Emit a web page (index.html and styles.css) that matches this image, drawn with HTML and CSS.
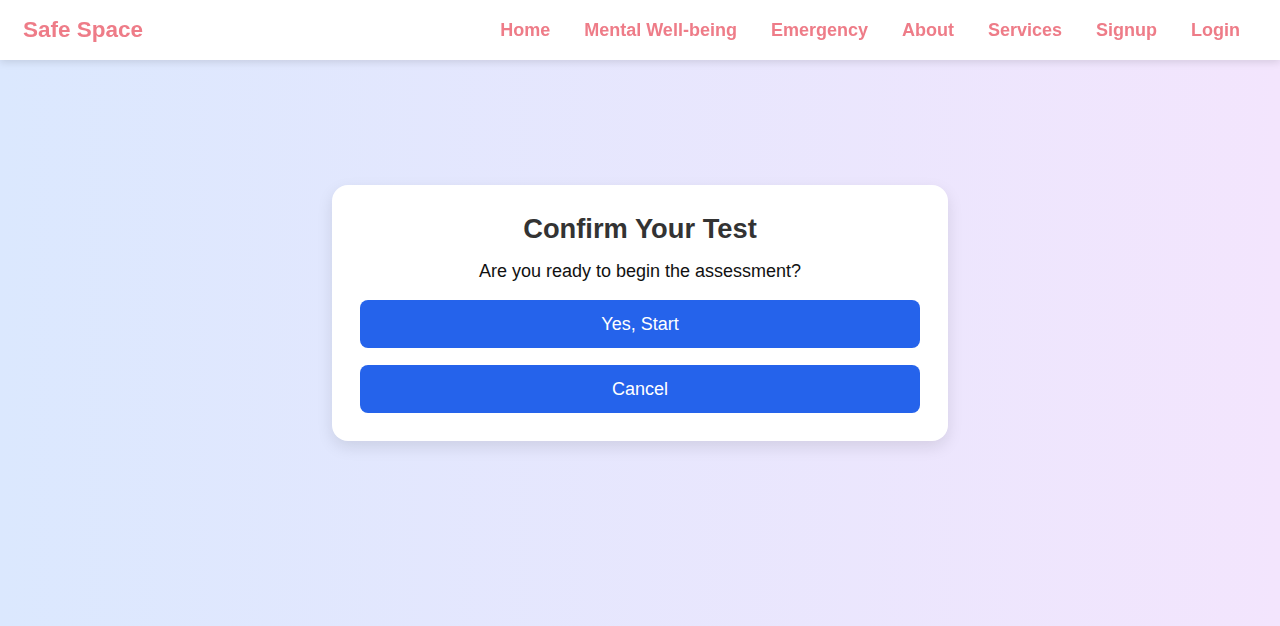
FILE: index.html
```html
<!DOCTYPE html>
<html lang="en">
<head>
<meta charset="utf-8">
<title>Safe Space</title>
<link rel="stylesheet" href="styles.css">
</head>
<body>
<nav class="navbar">
  <a class="logo" href="#">Safe Space</a>
  <ul class="nav-links">
    <li><a href="#">Home</a></li>
    <li><a href="#">Mental Well-being</a></li>
    <li><a href="#">Emergency</a></li>
    <li><a href="#">About</a></li>
    <li><a href="#">Services</a></li>
    <li><a href="#">Signup</a></li>
    <li><a href="#">Login</a></li>
  </ul>
</nav>
<main class="page">
  <section class="card">
    <h1 class="card-title">Confirm Your Test</h1>
    <p class="card-text">Are you ready to begin the assessment?</p>
    <button class="btn">Yes, Start</button>
    <button class="btn">Cancel</button>
  </section>
</main>
</body>
</html>
```
FILE: styles.css
```css
* { box-sizing: border-box; }
html, body { margin: 0; padding: 0; }
body {
  font-family: "Liberation Sans", Arial, sans-serif;
  background: linear-gradient(to right, #dbe8fe, #f3e5fd);
  min-height: 100vh;
}
.navbar {
  position: fixed;
  top: 0; left: 0; right: 0;
  height: 60px;
  background: #fff;
  box-shadow: 0 2px 8px rgba(0,0,0,0.12);
  display: flex;
  align-items: center;
  justify-content: space-between;
  padding: 0 23px 0 23px;
  z-index: 10;
}
.logo {
  color: #ee7c88;
  font-weight: bold;
  font-size: 22.5px;
  text-decoration: none;
}
.nav-links {
  list-style: none;
  display: flex;
  margin: 0;
  padding: 0;
}
.nav-links a {
  display: block;
  padding: 0 17px;
  color: #ee7c88;
  font-weight: bold;
  font-size: 18px;
  text-decoration: none;
}
.page {
  min-height: 100vh;
  display: flex;
  align-items: center;
  justify-content: center;
}
.card {
  width: 616px;
  background: #fff;
  border-radius: 16px;
  padding: 28px;
  box-shadow: 0 6px 16px rgba(0,0,0,0.1);
  display: flex;
  flex-direction: column;
  align-items: stretch;
  text-align: center;
}
.card-title {
  margin: 0;
  font-size: 27.3px;
  font-weight: bold;
  color: #333;
  line-height: 32px;
}
.card-text {
  margin: 14px 0 17px;
  font-size: 18px;
  color: #111;
  line-height: 24px;
}
.btn {
  height: 48px;
  border: none;
  border-radius: 8px;
  background: #2563eb;
  color: #fff;
  font-family: inherit;
  font-size: 18px;
  cursor: pointer;
}
.btn + .btn { margin-top: 17px; }
```
